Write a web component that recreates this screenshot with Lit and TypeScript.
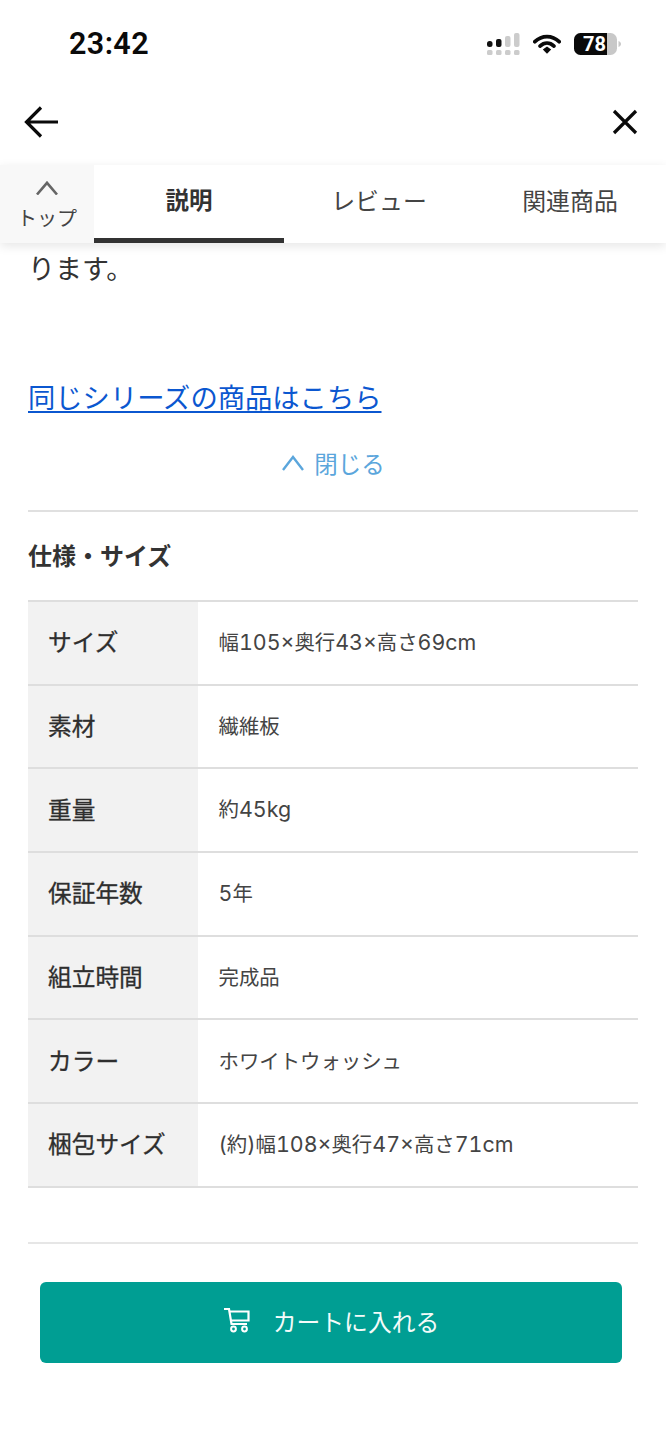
import { LitElement, html, css } from "lit";
import { customElement } from "lit/decorators.js";

const rows: [string, string][] = [
  ["サイズ", "幅105×奥行43×高さ69cm"],
  ["素材", "繊維板"],
  ["重量", "約45kg"],
  ["保証年数", "5年"],
  ["組立時間", "完成品"],
  ["カラー", "ホワイトウォッシュ"],
  ["梱包サイズ", "(約)幅108×奥行47×高さ71cm"],
];

@customElement("app-root")
export class AppRoot extends LitElement {
  static styles = css`
    :host {
      display: block;
      width: 666px;
      height: 1440px;
      overflow: hidden;
      background: #fff;
      color: #333;
      font-family: "Noto Sans CJK JP", "Liberation Sans", sans-serif;
    }
    .status {
      height: 88px;
      display: flex;
      align-items: center;
      justify-content: space-between;
      padding: 0 45px 0 69px;
      box-sizing: border-box;
    }
    .time {
      font-family: "Roboto", "Liberation Sans", sans-serif;
      font-weight: 600;
      font-size: 30.5px;
      line-height: 36px;
      color: #0a0a0a;
      letter-spacing: 0.4px;
    }
    .indicators {
      display: flex;
      align-items: center;
      gap: 13px;
    }
    .indicators svg {
      display: block;
    }
    .battery-text {
      font-family: "Roboto", "Liberation Sans", sans-serif;
      font-weight: 700;
      font-size: 20px;
      fill: #fff;
    }
    .nav {
      height: 77px;
      display: flex;
      align-items: center;
      justify-content: space-between;
      padding: 0 27px 10px 24px;
      box-sizing: border-box;
    }
    .nav svg {
      display: block;
    }
    .header {
      display: flex;
      height: 78px;
      box-shadow: 0 3px 10px rgba(0, 0, 0, 0.1);
      position: relative;
      background: #fff;
    }
    .top {
      width: 94px;
      background: #f8f8f8;
      display: flex;
      flex-direction: column;
      align-items: center;
      font-size: 20px;
      line-height: 24px;
      color: #444;
      padding-top: 16px;
      box-sizing: border-box;
    }
    .top svg {
      display: block;
      margin-bottom: 11px;
    }
    .tab {
      flex: 1;
      display: flex;
      align-items: center;
      justify-content: center;
      font-size: 23.9px;
      color: #444;
      box-sizing: border-box;
      padding: 0 1px 5px 0;
      border-bottom: 5px solid transparent;
    }
    .tab.active {
      font-weight: 700;
      font-size: 23.5px;
      padding-right: 0;
      color: #333;
      border-bottom-color: #333;
    }
    .content {
      padding: 0 28px;
    }
    .tail {
      font-size: 27px;
      line-height: 40px;
      margin-top: 5px;
      color: #333;
    }
    .link {
      display: inline-block;
      font-size: 27.3px;
      line-height: 40px;
      margin-top: 88px;
      color: #0b57d0;
      text-decoration: underline;
      text-underline-offset: 3px;
    }
    .close {
      display: flex;
      align-items: center;
      justify-content: center;
      gap: 9px;
      color: #5ba6dc;
      font-size: 23.5px;
      line-height: 34px;
      margin-top: 30px;
    }
    .close svg {
      display: block;
    }
    .rule {
      border: 0;
      border-top: 2px solid #e0e0e0;
      margin: 30px 0 0;
    }
    h2 {
      font-size: 24px;
      line-height: 36px;
      font-weight: 700;
      margin: 25px 0 27px;
      color: #333;
    }
    .table {
      border-top: 2px solid #dedede;
    }
    .row {
      display: grid;
      grid-template-columns: 170px 1fr;
      height: 83.7px;
      box-sizing: border-box;
      border-bottom: 2px solid #dedede;
    }
    .th {
      background: #f2f2f2;
      display: flex;
      align-items: center;
      padding: 0 0 3px 20px;
      font-size: 23.7px;
      font-weight: 400;
      color: #2e2e2e;
      -webkit-text-stroke: 0.3px #2e2e2e;
    }
    .td {
      display: block;
      align-self: center;
      padding: 0 0 3px 20.5px;
      font-size: 20.4px;
      line-height: 30px;
      color: #444;
      white-space: nowrap;
    }
    .latin {
      font-family: "Inter", "Liberation Sans", sans-serif;
      font-size: 21.4px;
      font-variant-numeric: tabular-nums;
    }
    .rule2 {
      border: 0;
      border-top: 2px solid #e6e6e6;
      margin: 54px 0 0;
    }
    .cart {
      margin: 38px 16px 0 12px;
      height: 81px;
      background: #009e93;
      border-radius: 6px;
      display: flex;
      align-items: center;
      justify-content: center;
      gap: 22px;
      color: #f4fbfa;
      font-size: 23.8px;
      padding-bottom: 4px;
      box-sizing: border-box;
    }
    .cart svg {
      display: block;
    }
  `;

  private value(v: string) {
    return v
      .split(/([0-9a-z×()]+)/)
      .map((part, i) => (i % 2 ? html`<span class="latin">${part}</span>` : part));
  }

  render() {
    return html`
      <div class="status">
        <span class="time">23:42</span>
        <div class="indicators">
          <svg width="34" height="24" viewBox="0 0 34 24">
            <rect x="1" y="9" width="5.500" height="6" rx="2.500" fill="#111" />
            <rect x="10" y="7" width="5.500" height="8" rx="2" fill="#111" />
            <rect x="19" y="4" width="5.500" height="11" rx="2" fill="#ccc" />
            <rect x="28" y="1" width="5.500" height="14" rx="2" fill="#ccc" />
            <rect x="1" y="18" width="5.500" height="5" rx="1.500" fill="#ccc" />
            <rect x="10" y="18" width="5.500" height="5" rx="1.500" fill="#ccc" />
            <rect x="19" y="18" width="5.500" height="5" rx="1.500" fill="#ccc" />
            <rect x="28" y="18" width="5.500" height="5" rx="1.500" fill="#ccc" />
          </svg>
          <svg width="28" height="24" viewBox="0 0 30 24">
            <path d="M2 9.500C9.500 2.200 20.500 2.200 28 9.500" fill="none" stroke="#0a0a0a" stroke-width="4" stroke-linecap="round" />
            <path d="M7.500 14.200C12 10 18 10 22.500 14.200" fill="none" stroke="#0a0a0a" stroke-width="4" stroke-linecap="round" />
            <path d="M10.500 18L15 14.800 19.500 18 15 22.500Z" fill="#0a0a0a" />
          </svg>
          <svg width="47" height="24" viewBox="0 0 47 24">
            <rect x="0" y="1" width="43" height="22" rx="6.500" fill="#c8c8c8" />
            <path d="M6.500 1H33V23H6.500A6.500 6.500 0 0 1 0 16.500V7.500A6.500 6.500 0 0 1 6.500 1Z" fill="#0a0a0a" />
            <path d="M44.500 9C46 9.600 47 10.700 47 12S46 14.400 44.500 15Z" fill="#c8c8c8" />
            <text class="battery-text" x="20.500" y="19" text-anchor="middle">78</text>
          </svg>
        </div>
      </div>
      <div class="nav">
        <svg width="36" height="34" viewBox="0 0 36 34">
          <path d="M34 17H3M17 2.500L2.500 17 17 31.500" fill="none" stroke="#0a0a0a" stroke-width="3.200" />
        </svg>
        <svg width="28" height="28" viewBox="0 0 28 28">
          <path d="M3 3L25 25M25 3L3 25" fill="none" stroke="#0a0a0a" stroke-width="3.200" />
        </svg>
      </div>
      <div class="header">
        <div class="top">
          <svg width="24" height="14" viewBox="0 0 24 14">
            <path d="M2 13.500L12 1.800 22 13.500" fill="none" stroke="#666" stroke-width="2.600" />
          </svg>
          <span>トップ</span>
        </div>
        <div class="tab active">説明</div>
        <div class="tab">レビュー</div>
        <div class="tab">関連商品</div>
      </div>
      <div class="content">
        <div class="tail">ります。</div>
        <a class="link">同じシリーズの商品はこちら</a>
        <div class="close">
          <svg width="24" height="16" viewBox="0 0 24 16">
            <path d="M2 15L12 2 22 15" fill="none" stroke="#5ba6dc" stroke-width="2.400" />
          </svg>
          <span>閉じる</span>
        </div>
        <hr class="rule" />
        <h2>仕様・サイズ</h2>
        <div class="table">
          ${rows.map(
            ([k, v]) => html`<div class="row"><div class="th">${k}</div><div class="td">${this.value(v)}</div></div>`
          )}
        </div>
        <hr class="rule2" />
        <div class="cart">
          <svg width="28" height="26" viewBox="0 0 28 26">
            <path d="M1 2H6L8.500 17H24M7 4.500H25.500V13.500H8" fill="none" stroke="#fff" stroke-width="2.200" />
            <circle cx="10.500" cy="22" r="2.400" fill="none" stroke="#fff" stroke-width="2" />
            <circle cx="21.500" cy="22" r="2.400" fill="none" stroke="#fff" stroke-width="2" />
          </svg>
          <span>カートに入れる</span>
        </div>
      </div>
    `;
  }
}
